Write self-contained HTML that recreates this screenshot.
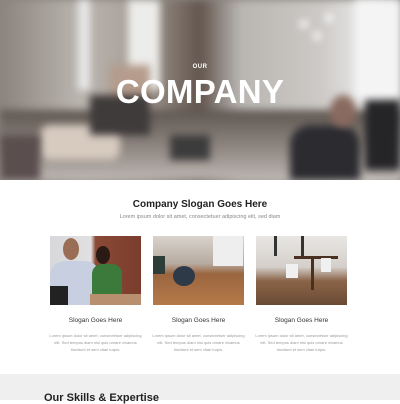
<!DOCTYPE html>
<html><head><meta charset="utf-8"><style>
*{margin:0;padding:0;box-sizing:border-box}
body{width:400px;height:400px;overflow:hidden;background:#fff;font-family:"Liberation Sans",sans-serif;position:relative}
.hero{position:absolute;left:0;top:0;width:400px;height:180px;overflow:hidden;background:#8a8580}
.b{position:absolute;filter:blur(4px)}
.t{position:absolute;left:0;width:400px;text-align:center;color:#fff}
.img{position:absolute;top:236px;width:91px;height:69px;overflow:hidden}
.h3{position:absolute;width:91px;text-align:center;font-size:6.5px;color:#333;top:317px}
.p{position:absolute;width:93px;text-align:center;font-size:4px;line-height:7px;color:#999;top:332px}
</style></head><body>
<div class="hero">
<div class="b" style="left:0;top:0;width:400px;height:180px;background:linear-gradient(90deg,#8a837c 0%,#bbb6b0 20%,#a69e96 35%,#62554d 50%,#b9b5b1 60%,#ccc9c6 80%,#ebebeb 92%,#d0d0d0 100%)"></div>
<div class="b" style="left:78px;top:0;width:12px;height:90px;background:#e8e8e8"></div>
<div class="b" style="left:128px;top:0;width:32px;height:90px;background:#ececea"></div>
<div class="b" style="left:355px;top:0;width:45px;height:100px;background:#f4f4f4"></div>
<div class="b" style="left:110px;top:65px;width:40px;height:40px;background:#b59c8c"></div>
<div class="b" style="left:0;top:110px;width:400px;height:70px;background:linear-gradient(180deg,#5e5650,#968d87 60%,#bdb7b2)"></div>
<div class="b" style="left:40px;top:125px;width:80px;height:35px;background:#d7cbc0;border-radius:10px"></div>
<div class="b" style="left:170px;top:135px;width:40px;height:25px;background:#3c3c3c"></div>
<div class="b" style="left:0;top:135px;width:40px;height:45px;background:#5a4e4e"></div>
<div class="b" style="left:290px;top:125px;width:70px;height:55px;background:#2b2b30;border-radius:20px 20px 0 0"></div>
<div class="b" style="left:330px;top:95px;width:26px;height:32px;background:#8a6a5e;border-radius:50%"></div>
<div class="b" style="left:365px;top:100px;width:35px;height:70px;background:#252528"></div>
<div class="b" style="left:90px;top:95px;width:60px;height:40px;background:#3f3b3b"></div>
<div class="b" style="left:300px;top:20px;width:8px;height:8px;background:#fff;border-radius:50%"></div>
<div class="b" style="left:325px;top:14px;width:8px;height:8px;background:#fff;border-radius:50%"></div>
<div class="b" style="left:313px;top:32px;width:8px;height:8px;background:#fff;border-radius:50%"></div>
<div class="t" style="top:64px;font-size:6px;font-weight:bold;letter-spacing:.5px">OUR</div>
<div class="t" style="top:73px;font-size:33px;font-weight:bold;letter-spacing:.3px">COMPANY</div>
</div>
<div class="t" style="top:199px;color:#222;font-size:10px;font-weight:bold">Company Slogan Goes Here</div>
<div class="t" style="top:214px;color:#888;font-size:5.5px">Lorem ipsum dolor sit amet, consectetuer adipiscing elit, sed diam</div>
<div class="img" style="left:50px;background:linear-gradient(90deg,#d8d8dc 0%,#e0e0e0 45%,#8b4a36 50%,#7a3c2c 100%)">
<div style="position:absolute;left:0;top:25px;width:50px;height:44px;background:#c7cfe0;border-radius:15px 15px 0 0"></div>
<div style="position:absolute;left:13px;top:2px;width:16px;height:22px;background:#9a6e55;border-radius:50%"></div>
<div style="position:absolute;left:46px;top:10px;width:14px;height:18px;background:#2a1a14;border-radius:50%"></div>
<div style="position:absolute;left:42px;top:28px;width:30px;height:30px;background:#3c7a3c;border-radius:10px 10px 0 0"></div>
<div style="position:absolute;left:0;top:50px;width:18px;height:19px;background:#222"></div>
<div style="position:absolute;left:40px;top:58px;width:51px;height:11px;background:#b89070"></div>
</div>
<div class="img" style="left:153px;background:linear-gradient(180deg,#d9d3cd 0%,#b7aba0 40%,#9a6540 55%,#b57a48 100%)">
<div style="position:absolute;left:20px;top:30px;width:22px;height:20px;background:#2f3a48;border-radius:50%"></div>
<div style="position:absolute;left:0;top:20px;width:12px;height:18px;background:#2f3d3a"></div>
<div style="position:absolute;left:60px;top:0;width:30px;height:30px;background:#eeeeee"></div>
</div>
<div class="img" style="left:256px;background:linear-gradient(180deg,#e8e6e4 0%,#d4cfca 45%,#8a6448 65%,#6b4a33 100%)">
<div style="position:absolute;left:18px;top:0;width:3px;height:20px;background:#333"></div>
<div style="position:absolute;left:45px;top:0;width:3px;height:20px;background:#333"></div>
<div style="position:absolute;left:38px;top:20px;width:44px;height:3px;background:#4a3020"></div>
<div style="position:absolute;left:55px;top:20px;width:3px;height:34px;background:#4a3020"></div>
<div style="position:absolute;left:30px;top:28px;width:12px;height:14px;background:#f0f0f0"></div>
<div style="position:absolute;left:65px;top:22px;width:10px;height:14px;background:#f0f0f0"></div>
</div>
<div class="h3" style="left:50px">Slogan Goes Here</div>
<div class="h3" style="left:153px">Slogan Goes Here</div>
<div class="h3" style="left:256px">Slogan Goes Here</div>
<div class="p" style="left:49px">Lorem ipsum dolor sit amet, consectetuer adipiscing elit. Sed tempus diam nisi quis ornare vivamus tincidunt et sem vitae turpis.</div>
<div class="p" style="left:152px">Lorem ipsum dolor sit amet, consectetuer adipiscing elit. Sed tempus diam nisi quis ornare vivamus tincidunt et sem vitae turpis.</div>
<div class="p" style="left:255px">Lorem ipsum dolor sit amet, consectetuer adipiscing elit. Sed tempus diam nisi quis ornare vivamus tincidunt et sem vitae turpis.</div>
<div style="position:absolute;left:0;top:374px;width:400px;height:26px;background:#efefef">
<div style="position:absolute;left:44px;top:18px;font-size:11px;font-weight:bold;color:#222">Our Skills &amp; Expertise</div>
</div>
</body></html>
